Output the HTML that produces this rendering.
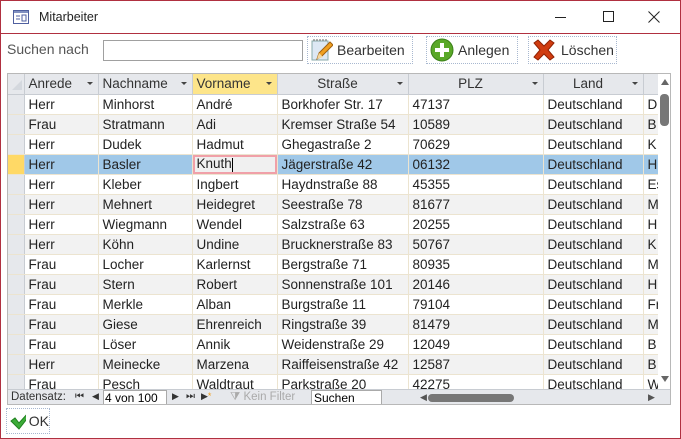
<!DOCTYPE html>
<html><head><meta charset="utf-8"><style>
*{box-sizing:border-box;margin:0;padding:0}
body{width:681px;height:439px;background:#fff;font-family:"Liberation Sans",sans-serif;font-size:13px;color:#222;position:relative;overflow:hidden}
.win{position:absolute;left:0;top:0;width:681px;height:439px;border:1px solid #b03040;}
.abs{position:absolute}
.titlebar{left:0;top:0;width:679px;height:33px;border-bottom:1px solid #b03040}
.btn{border:1px dotted #a8b8d0;display:flex;align-items:center;font-size:14px;color:#333}
.grid{left:6px;top:72px;width:664px;height:332px;border:1px solid #b8b8b8;overflow:hidden;background:#fff}
table{border-collapse:collapse;table-layout:fixed;position:absolute;left:0;top:0;width:675px}
td,th{height:20px;border-right:1px solid #ece4d0;border-bottom:1px solid #ece4d0;white-space:nowrap;overflow:hidden;padding-left:4px;font-weight:normal;font-size:13.5px}
th{background:#e6e8ec;border-right:1px solid #c8ccd2;border-bottom:1px solid #c8ccd2;color:#333;position:relative;text-align:center;padding:0 10px 0 0}
th.l{text-align:left;padding-left:4px}
th .a{position:absolute;right:5px;top:8px;width:0;height:0;border-left:3px solid transparent;border-right:3px solid transparent;border-top:3px solid #444}
td.sel{background:#e6e8ec;border-right:1px solid #c8ccd2;padding:0}
tr.g td{background:#f2f2f2}
tr.g td.sel,tr td.sel{background:#e6e8ec}
tr.s td{background:#a0c8e8}
tr.s td.sel{background:#ffd966}
</style></head><body>
<div class="win">
<div class="abs titlebar">
 <svg class="abs" style="left:12px;top:9px" width="16" height="14"><rect x="0.5" y="0.5" width="15" height="13" fill="#fff" stroke="#5060a0"/><rect x="1" y="1" width="14" height="2" fill="#8090c0"/><line x1="3" y1="6" x2="7" y2="6" stroke="#5060a0"/><line x1="3" y1="9" x2="7" y2="9" stroke="#5060a0"/><rect x="9" y="5" width="4" height="6" fill="none" stroke="#5060a0"/></svg>
 <div class="abs" style="left:38px;top:9px;font-size:12.5px;color:#222">Mitarbeiter</div>
 <div class="abs" style="left:554px;top:16px;width:11px;height:1px;background:#222"></div>
 <div class="abs" style="left:602px;top:10px;width:11px;height:11px;border:1px solid #222"></div>
 <svg class="abs" style="left:647px;top:10px" width="12" height="12"><path d="M0.5 0.5L11.5 11.5M11.5 0.5L0.5 11.5" stroke="#222"/></svg>
</div>
<div class="abs" style="left:6px;top:40px;font-size:14px;color:#555">Suchen nach</div>
<div class="abs" style="left:102px;top:39px;width:200px;height:21px;border:1px solid #a0a0a0"></div>
<div class="abs btn" style="left:306px;top:35px;width:106px;height:28px">
 <svg style="margin:0 4px 0 3px" width="22" height="24"><rect x="1" y="3" width="16" height="19" fill="#dde8f4" stroke="#8aa"/><path d="M3 3v-2M6 3v-2M9 3v-2M12 3v-2M15 3v-2" stroke="#666"/><path d="M6 21l2-6 11-11 3 3-11 11z" fill="#f0a020" stroke="#a06010"/><path d="M6 21l2-6 4 4z" fill="#f4d8a0"/></svg>Bearbeiten</div>
<div class="abs btn" style="left:425px;top:35px;width:92px;height:28px">
 <svg style="margin:0 4px 0 3px" width="24" height="24"><circle cx="12" cy="12" r="11" fill="#5aa828" stroke="#3a8018"/><rect x="10" y="5" width="4" height="14" fill="#fff"/><rect x="5" y="10" width="14" height="4" fill="#fff"/></svg>Anlegen</div>
 <div class="abs btn" style="left:527px;top:35px;width:89px;height:28px">
 <svg style="margin:0 5px 0 3px" width="24" height="22"><path d="M2 4l4-3 6 6 6-6 4 3-6 7 6 7-4 3-6-6-6 6-4-3 6-7z" fill="#d03c10" stroke="#902000"/></svg>Löschen</div>

<div class="abs grid">
<table>
<colgroup><col style="width:16px"><col style="width:74px"><col style="width:94px"><col style="width:85px"><col style="width:131px"><col style="width:135px"><col style="width:100px"><col style="width:40px"></colgroup>
<tr><th style="background:#e6e8ec"><svg class="abs" style="left:3px;top:5px" width="12" height="12"><path d="M11 1V11H1z" fill="#d4d8de"/></svg></th><th class="l">Anrede<span class="a"></span></th><th class="l">Nachname<span class="a"></span></th><th class="l" style="background:#fde58a">Vorname<span class="a"></span></th><th>Straße<span class="a"></span></th><th>PLZ<span class="a"></span></th><th>Land<span class="a"></span></th><th></th></tr>
<tr><td class="sel"></td><td>Herr</td><td>Minhorst</td><td>André</td><td>Borkhofer Str. 17</td><td>47137</td><td>Deutschland</td><td>D</td></tr>
<tr class="g"><td class="sel"></td><td>Frau</td><td>Stratmann</td><td>Adi</td><td>Kremser Straße 54</td><td>10589</td><td>Deutschland</td><td>B</td></tr>
<tr><td class="sel"></td><td>Herr</td><td>Dudek</td><td>Hadmut</td><td>Ghegastraße 2</td><td>70629</td><td>Deutschland</td><td>K</td></tr>
<tr class="s"><td class="sel"></td><td>Herr</td><td>Basler</td><td style="background:#f0f0f0;box-shadow:inset 0 0 0 2px #f0a0a8">Knuth<span style="display:inline-block;width:1px;height:14px;background:#000;vertical-align:middle"></span></td><td>Jägerstraße 42</td><td>06132</td><td>Deutschland</td><td>H</td></tr>
<tr><td class="sel"></td><td>Herr</td><td>Kleber</td><td>Ingbert</td><td>Haydnstraße 88</td><td>45355</td><td>Deutschland</td><td>Es</td></tr>
<tr class="g"><td class="sel"></td><td>Herr</td><td>Mehnert</td><td>Heidegret</td><td>Seestraße 78</td><td>81677</td><td>Deutschland</td><td>M</td></tr>
<tr><td class="sel"></td><td>Herr</td><td>Wiegmann</td><td>Wendel</td><td>Salzstraße 63</td><td>20255</td><td>Deutschland</td><td>H</td></tr>
<tr class="g"><td class="sel"></td><td>Herr</td><td>Köhn</td><td>Undine</td><td>Brucknerstraße 83</td><td>50767</td><td>Deutschland</td><td>K</td></tr>
<tr><td class="sel"></td><td>Frau</td><td>Locher</td><td>Karlernst</td><td>Bergstraße 71</td><td>80935</td><td>Deutschland</td><td>M</td></tr>
<tr class="g"><td class="sel"></td><td>Frau</td><td>Stern</td><td>Robert</td><td>Sonnenstraße 101</td><td>20146</td><td>Deutschland</td><td>H</td></tr>
<tr><td class="sel"></td><td>Frau</td><td>Merkle</td><td>Alban</td><td>Burgstraße 11</td><td>79104</td><td>Deutschland</td><td>Fr</td></tr>
<tr class="g"><td class="sel"></td><td>Frau</td><td>Giese</td><td>Ehrenreich</td><td>Ringstraße 39</td><td>81479</td><td>Deutschland</td><td>M</td></tr>
<tr><td class="sel"></td><td>Frau</td><td>Löser</td><td>Annik</td><td>Weidenstraße 29</td><td>12049</td><td>Deutschland</td><td>B</td></tr>
<tr class="g"><td class="sel"></td><td>Herr</td><td>Meinecke</td><td>Marzena</td><td>Raiffeisenstraße 42</td><td>12587</td><td>Deutschland</td><td>B</td></tr>
<tr><td class="sel"></td><td>Frau</td><td>Pesch</td><td>Waldtraut</td><td>Parkstraße 20</td><td>42275</td><td>Deutschland</td><td>W</td></tr>
</table>
<div class="abs" style="left:650px;top:0;width:13px;height:315px;background:#fff">
 <div class="abs" style="left:3px;top:5px;width:0;height:0;border-left:4px solid transparent;border-right:4px solid transparent;border-bottom:6px solid #666"></div>
 <div class="abs" style="left:2px;top:20px;width:9px;height:32px;border-radius:4px;background:#777"></div>
 <div class="abs" style="left:3px;top:302px;width:0;height:0;border-left:4px solid transparent;border-right:4px solid transparent;border-top:6px solid #666"></div>
</div>
<div class="abs" style="left:0;top:315px;width:663px;height:16px;background:#e6e8ec;border-top:1px solid #c8ccd2;font-size:11.5px;color:#333">
 <span class="abs" style="left:3px;top:1px">Datensatz:</span>
 <span class="abs" style="left:67px;top:1px;font-size:10px">⏮</span>
 <span class="abs" style="left:84px;top:1px;font-size:9px">◀</span>
 <div class="abs" style="left:95px;top:0;width:64px;height:15px;background:#fff;border:1px solid #aaa;font-size:12px;color:#000;padding-left:1px">4 von 100</div>
 <span class="abs" style="left:164px;top:1px;font-size:9px">▶</span>
 <span class="abs" style="left:178px;top:1px;font-size:10px">⏭</span>
 <span class="abs" style="left:193px;top:1px;font-size:9px">▶<span style="color:#f0a020">*</span></span>
 <span class="abs" style="left:222px;top:1px;color:#aaa">⧩ Kein Filter</span>
 <div class="abs" style="left:303px;top:0;width:71px;height:15px;background:#fff;border:1px solid #aaa;font-size:12px;color:#000;padding-left:2px">Suchen</div>
 <span class="abs" style="left:412px;top:2px;font-size:9px;color:#555">◀</span>
 <div class="abs" style="left:420px;top:4px;width:86px;height:8px;border-radius:4px;background:#777"></div>
 <span class="abs" style="left:640px;top:2px;font-size:9px;color:#555">▶</span>
</div>
</div>
<div class="abs btn" style="left:5px;top:407px;width:44px;height:26px">
 <svg style="margin:0 3px 0 3px" width="20" height="18"><path d="M1 9l4-3 4 5 9-10 2 2-11 14z" fill="#3cac38" stroke="#208020"/></svg>OK</div>
</div>
</body></html>
